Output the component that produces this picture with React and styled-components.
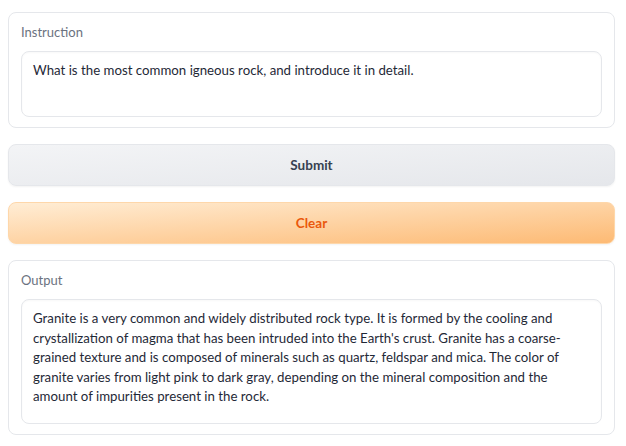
import React from 'react'
import styled, { createGlobalStyle } from 'styled-components'

const Global = createGlobalStyle`
  body{
    margin:0;
    background:#ffffff;
    font-family:"Lato","Noto Sans",sans-serif;
  }
`

const Page = styled.div`
  width: 607px;
  padding: 12px 0 0 8px;
  display: flex;
  flex-direction: column;
  gap: 16px;
`

const Panel = styled.div`
  border: 1px solid #e5e7eb;
  border-radius: 8px;
  padding: 10px 12px 10px 12px;
  display: flex;
  flex-direction: column;
  gap: 9px;
  background: #fff;
`

const Label = styled.div`
  font-size: 13px;
  color: #6b7280;
  line-height: 19px;
`

const Box = styled.div`
  border: 1px solid #e5e7eb;
  border-radius: 8px;
  box-shadow: inset 0 1px 2px rgba(0,0,0,0.03);
  padding: 9px 11px;
  min-height: ${p => p.$min || 0}px;
  box-sizing: border-box;
  font-size: 13.25px;
  line-height: 19.5px;
  color: #1f2937;
`

const Button = styled.button`
  height: 42px;
  width: 100%;
  border-radius: 8px;
  font-family: inherit;
  font-size: 13.5px;
  font-weight: 700;
  border: 1px solid ${p => (p.$primary ? '#fed7aa' : '#e5e7eb')};
  background: ${p => (p.$primary
    ? 'linear-gradient(to bottom right, #ffedd5, #fdba74)'
    : 'linear-gradient(to bottom right, #f3f4f6, #e5e7eb)')};
  color: ${p => (p.$primary ? '#ea580c' : '#374151')};
  box-shadow: 0 1px 2px rgba(0,0,0,0.05);
`

export default function App() {
  return (
    <>
      <Global />
      <Page>
        <Panel>
          <Label>Instruction</Label>
          <Box $min={66}>What is the most common igneous rock, and introduce it in detail.</Box>
        </Panel>
        <Button>Submit</Button>
        <Button $primary>Clear</Button>
        <Panel>
          <Label>Output</Label>
          <Box $min={125}>
            Granite is a very common and widely distributed rock type. It is formed by the cooling and
            crystallization of magma that has been intruded into the Earth's crust. Granite has a coarse-grained
            texture and is composed of minerals such as quartz, feldspar and mica. The color of granite varies
            from light pink to dark gray, depending on the mineral composition and the amount of impurities
            present in the rock.
          </Box>
        </Panel>
      </Page>
    </>
  )
}
